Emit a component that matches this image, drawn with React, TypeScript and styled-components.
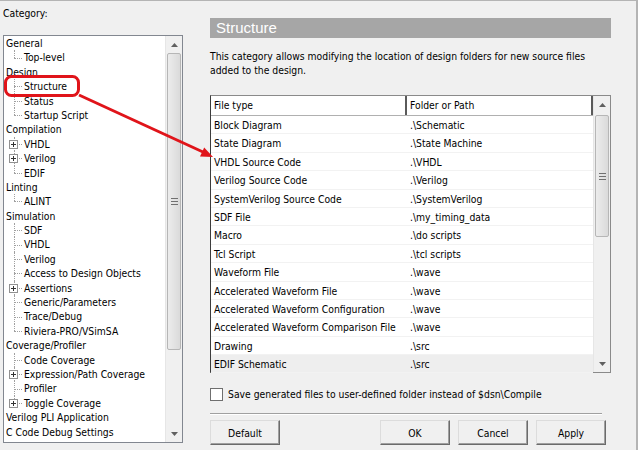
import React from 'react';
import styled, { createGlobalStyle } from 'styled-components';

const GlobalStyle = createGlobalStyle`
	html, body {
		margin: 0;
		padding: 0;
		background: #f0f0f0;
	}
	body {
		font-family: 'DejaVu Sans Condensed', 'DejaVu Sans', sans-serif;
		font-stretch: condensed;
		font-size: 10.3px;
		color: #000;
	}
`;

const Window = styled.div`
	position: relative;
	width: 638px;
	height: 450px;
	box-sizing: border-box;
	border-top: 1px solid #b4b4b4;
	border-right: 2px solid #b4b4b4;
	display: grid;
	grid-template-columns: 184px 1fr;
	overflow: hidden;
`;

const Sidebar = styled.div`
	padding: 4px 0 0 3px;
	display: flex;
	flex-direction: column;
`;

const Label = styled.div`
	height: 16px;
	line-height: 16px;
`;

const TreeBox = styled.div`
	margin-top: 14px;
	width: 180px;
	height: 408px;
	box-sizing: border-box;
	border: 1px solid #828790;
	background: #fff;
	display: flex;
`;

const TreeList = styled.div`
	flex: 1;
	padding-left: 2px;
`;

const TreeRow = styled.div`
	height: 14.4px;
	line-height: 14.4px;
	display: flex;
	align-items: stretch;
	white-space: nowrap;
`;

const Connector = styled.span<{ $last?: boolean }>`
	position: relative;
	width: 18px;
	flex: none;

	&::before {
		content: "";
		position: absolute;
		left: 8px;
		top: 0;
		height: ${p => (p.$last ? '50%' : '100%')};
		border-left: 1px dotted #a0a0a0;
	}
	&::after {
		content: "";
		position: absolute;
		left: 8px;
		top: 50%;
		width: 8px;
		border-top: 1px dotted #a0a0a0;
	}
`;

const PlusBox = styled.span`
	position: absolute;
	z-index: 1;
	left: 3px;
	top: 3px;
	width: 9px;
	height: 9px;
	box-sizing: border-box;
	border: 1px solid #919191;
	background:
		linear-gradient(#333, #333) center / 5px 1px no-repeat,
		linear-gradient(#333, #333) center / 1px 5px no-repeat,
		#fff;
`;

const Scrollbar = styled.div`
	width: 17px;
	flex: none;
	display: flex;
	flex-direction: column;
	background: #f0f0f0;
	border-left: 1px solid #e6e6e6;
	box-sizing: border-box;
`;

const ArrowBtn = styled.div`
	height: 17px;
	display: flex;
	align-items: center;
	justify-content: center;
	flex: none;
`;

const Track = styled.div`
	flex: 1;
	display: flex;
	flex-direction: column;
	align-items: center;
`;

const Thumb = styled.div`
	width: 14px;
	box-sizing: border-box;
	border: 1px solid #b6b6b6;
	border-radius: 2px;
	background: linear-gradient(90deg, #ececec, #dadada);
	display: flex;
	align-items: center;
	justify-content: center;
`;

const Grip = styled.div`
	width: 7px;
	height: 7px;
	background: repeating-linear-gradient(#707070 0 1px, transparent 1px 3px);
`;

const Main = styled.div`
	padding: 17px 25px 0 26px;
	display: flex;
	flex-direction: column;
`;

const TitleBar = styled.div`
	height: 20px;
	background: #a6a6a6;
	color: #fff;
	font-family: 'Liberation Sans', Arial, sans-serif;
	font-stretch: normal;
	font-size: 15px;
	line-height: 20px;
	padding-left: 6px;
`;

const Description = styled.p`
	margin: 11px 0 0;
	line-height: 14px;
	width: 385px;
`;

const Table = styled.div`
	margin-top: 18px;
	height: 278px;
	box-sizing: border-box;
	border: 1px solid #8a8a8a;
	border-left-color: #3c3c3c;
	background: #fff;
	display: flex;
`;

const Grid = styled.div`
	flex: 1;
	display: flex;
	flex-direction: column;
`;

const HeaderRow = styled.div`
	display: grid;
	grid-template-columns: 196px 1fr;
	height: 20px;
	flex: none;
	border-bottom: 1px solid #b0b0b0;
	box-sizing: border-box;
`;

const HeaderCell = styled.div`
	padding-left: 3px;
	line-height: 19px;
	border-right: 2px solid #5a5a5a;
`;

const DataRow = styled.div<{ $shaded?: boolean }>`
	display: grid;
	grid-template-columns: 196px 1fr;
	height: 18.4px;
	line-height: 18px;
	box-sizing: border-box;
	border-bottom: 1px solid #f2f2f2;
	background: ${p => (p.$shaded ? '#eeeeee' : '#fff')};
`;

const Cell = styled.div`
	padding-left: 3px;
	white-space: nowrap;
`;

const CheckRow = styled.label`
	margin-top: 13px;
	height: 16px;
	display: flex;
	align-items: center;
	gap: 5px;
`;

const CheckBox = styled.span`
	width: 13px;
	height: 13px;
	box-sizing: border-box;
	border: 1px solid #6f6f6f;
	background: #fff;
	flex: none;
`;

const Separator = styled.div`
	margin-top: 11px;
	width: 392px;
	border-top: 1px solid #a0a0a0;
	border-bottom: 1px solid #fff;
`;

const ButtonRow = styled.div`
	margin-top: 5px;
	margin-right: 5px;
	display: flex;
	gap: 8px;
`;

const Spacer = styled.div`
	flex: 1;
`;

const Button = styled.button`
	width: 70px;
	height: 25px;
	box-sizing: border-box;
	background: #f0f0f0;
	border: 1px solid;
	border-color: #dcdcdc #6b6b6b #6b6b6b #dcdcdc;
	box-shadow: inset -1px -1px 0 #a0a0a0;
	font: inherit;
	color: #000;
	padding: 0;
`;

const Overlay = styled.svg`
	position: absolute;
	left: 0;
	top: 0;
	pointer-events: none;
`;

type TreeItem = { label: string; child?: boolean; last?: boolean; plus?: boolean };

const tree: TreeItem[] = [
	{ label: 'General' },
	{ label: 'Top-level', child: true, last: true },
	{ label: 'Design' },
	{ label: 'Structure', child: true },
	{ label: 'Status', child: true },
	{ label: 'Startup Script', child: true, last: true },
	{ label: 'Compilation' },
	{ label: 'VHDL', child: true, plus: true },
	{ label: 'Verilog', child: true, plus: true },
	{ label: 'EDIF', child: true, last: true },
	{ label: 'Linting' },
	{ label: 'ALINT', child: true, last: true },
	{ label: 'Simulation' },
	{ label: 'SDF', child: true },
	{ label: 'VHDL', child: true },
	{ label: 'Verilog', child: true },
	{ label: 'Access to Design Objects', child: true },
	{ label: 'Assertions', child: true, plus: true },
	{ label: 'Generic/Parameters', child: true },
	{ label: 'Trace/Debug', child: true },
	{ label: 'Riviera-PRO/VSimSA', child: true, last: true },
	{ label: 'Coverage/Profiler' },
	{ label: 'Code Coverage', child: true },
	{ label: 'Expression/Path Coverage', child: true, plus: true },
	{ label: 'Profiler', child: true },
	{ label: 'Toggle Coverage', child: true, plus: true, last: true },
	{ label: 'Verilog PLI Application' },
	{ label: 'C Code Debug Settings' },
];

const folders: [string, string][] = [
	['Block Diagram', '.\\Schematic'],
	['State Diagram', '.\\State Machine'],
	['VHDL Source Code', '.\\VHDL'],
	['Verilog Source Code', '.\\Verilog'],
	['SystemVerilog Source Code', '.\\SystemVerilog'],
	['SDF File', '.\\my_timing_data'],
	['Macro', '.\\do scripts'],
	['Tcl Script', '.\\tcl scripts'],
	['Waveform File', '.\\wave'],
	['Accelerated Waveform File', '.\\wave'],
	['Accelerated Waveform Configuration', '.\\wave'],
	['Accelerated Waveform Comparison File', '.\\wave'],
	['Drawing', '.\\src'],
	['EDIF Schematic', '.\\src'],
];

const UpArrow = () => (
	<svg width="7" height="4" viewBox="0 0 7 4">
		<path d="M0 4 L3.5 0 L7 4 Z" fill="#606060" />
	</svg>
);

const DownArrow = () => (
	<svg width="7" height="4" viewBox="0 0 7 4">
		<path d="M0 0 L3.5 4 L7 0 Z" fill="#606060" />
	</svg>
);

const ScrollBar = ({ offset, size }: { offset: number; size: number }) => (
	<Scrollbar>
		<ArrowBtn><UpArrow /></ArrowBtn>
		<Track style={{ paddingTop: offset }}>
			<Thumb style={{ height: size }}>
				<Grip />
			</Thumb>
		</Track>
		<ArrowBtn><DownArrow /></ArrowBtn>
	</Scrollbar>
);

const App = () => {
	return (
		<>
			<GlobalStyle />
			<Window>
				<Sidebar>
					<Label>Category:</Label>
					<TreeBox>
						<TreeList>
							{tree.map((item, i) => (
								<TreeRow key={i}>
									{item.child && (
										<Connector $last={item.last}>
											{item.plus && <PlusBox />}
										</Connector>
									)}
									<span>{item.label}</span>
								</TreeRow>
							))}
						</TreeList>
						<ScrollBar offset={0} size={297} />
					</TreeBox>
				</Sidebar>

				<Main>
					<TitleBar>Structure</TitleBar>
					<Description>
						This category allows modifying the location of design folders for new source files
						added to the design.
					</Description>

					<Table>
						<Grid>
							<HeaderRow>
								<HeaderCell>File type</HeaderCell>
								<HeaderCell>Folder or Path</HeaderCell>
							</HeaderRow>
							{folders.map(([type, path], i) => (
								<DataRow key={type} $shaded={i === folders.length - 1}>
									<Cell>{type}</Cell>
									<Cell>{path}</Cell>
								</DataRow>
							))}
						</Grid>
						<ScrollBar offset={2} size={122} />
					</Table>

					<CheckRow>
						<CheckBox />
						<span>Save generated files to user-defined folder instead of $dsn\Compile</span>
					</CheckRow>

					<Separator />

					<ButtonRow>
						<Button>Default</Button>
						<Spacer />
						<Button>OK</Button>
						<Button>Cancel</Button>
						<Button>Apply</Button>
					</ButtonRow>
				</Main>

				<Overlay width="638" height="450" viewBox="0 0 638 450">
					<rect x="5.5" y="75.5" width="73" height="19" rx="6" fill="none" stroke="#e0141a" strokeWidth="3" />
					<line x1="79" y1="94" x2="203" y2="151" stroke="#e0141a" strokeWidth="3" />
					<polygon points="213,156 200,155.6 204.2,146.5" fill="#e0141a" />
				</Overlay>
			</Window>
		</>
	);
};

export default App;
